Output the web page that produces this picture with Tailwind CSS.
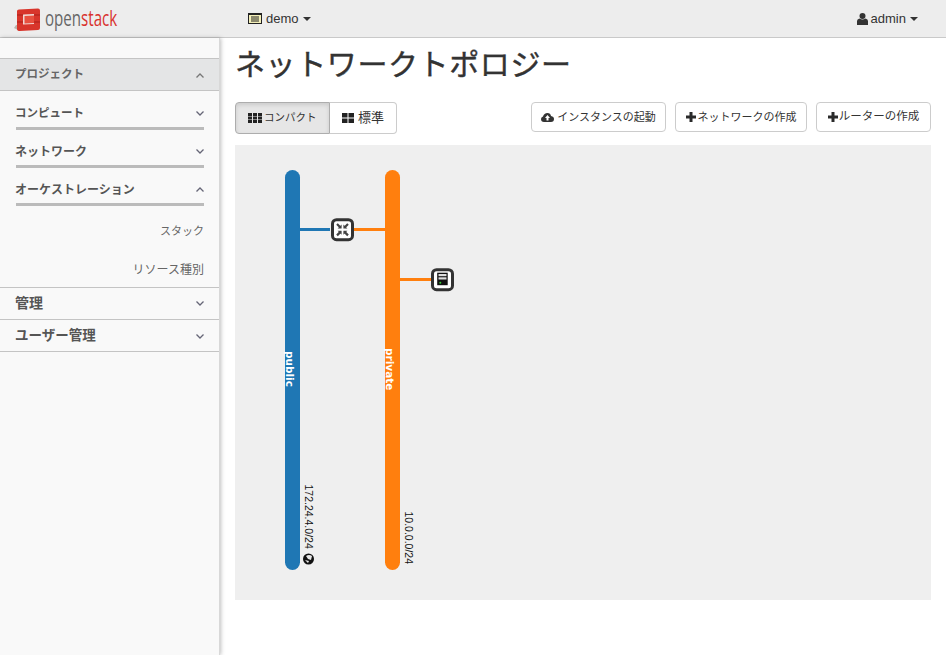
<!DOCTYPE html>
<html lang="ja">
<head>
<meta charset="utf-8">
<title>ネットワークトポロジー</title>
<script src="https://cdn.jsdelivr.net/npm/@tailwindcss/browser@4"></script>
</head>
<body class="font-['Liberation_Sans','Noto_Sans_CJK_JP',sans-serif] text-[#333] bg-white">
<div class="h-[655px] w-[946px] overflow-hidden flex flex-col">

    <!-- navbar -->
    <nav class="h-[38px] shrink-0 flex items-center bg-[#ededed] border-b border-[#c9c9c9] text-[13px] text-[#333]">
        <div class="w-[248px] shrink-0 pl-[14px] flex items-center gap-[6px]">
            <svg width="26" height="24" viewBox="0 0 26 24">
                <path d="M0 21 L4 23 L4 18 L2 18 Z" fill="#b9b4ad"/>
                <path d="M3 4 Q3 2.500 5 2.500 L24 1.500 Q26 1.500 26 3.500 L26 21 Q26 23 24 23 L6 24 Q3 24 3 22 Z" fill="#d8352b"/>
                <path d="M3 8 H10 M3 15 H10 M19 8 H26 M19 15 H26" stroke="#a9201a" stroke-width="1"/>
                <path d="M9 7.500 L20 7 L20 17 L9 17.500 Z" fill="#f0d8d4"/>
                <path d="M10.500 9 L20 8.500 L20 16 L10.500 16.500 Z" fill="#e8503f"/>
            </svg>
            <span class="font-['Open_Sans',sans-serif] text-[21px] leading-none scale-x-[.72] origin-left text-[#666] -ml-[1px]">open<span class="text-[#d9322d]">stack</span></span>
        </div>
        <div class="flex items-center gap-[4px]">
            <svg width="14" height="11" viewBox="0 0 14 11"><rect width="14" height="11" fill="#222"/><rect x="1" y="2" width="12" height="8" fill="#f3efb8"/><path d="M3 4 H11 M3 6 H11 M3 8 H11" stroke="#222" stroke-width="1"/></svg>
            <span>demo</span>
            <span class="w-0 h-0 border-x-[4px] border-x-transparent border-t-[4px] border-t-[#333]"></span>
        </div>
        <div class="ml-auto mr-[28px] flex items-center gap-[3px]">
            <svg width="11" height="12" viewBox="0 0 11 12"><circle cx="5.500" cy="3" r="3" fill="#333"/><path d="M0 12 V8 Q0 6 2.500 5.500 Q5.500 7.500 8.500 5.500 Q11 6 11 8 V12 Z" fill="#333"/></svg>
            <span>admin</span>
            <span class="w-0 h-0 border-x-[4px] border-x-transparent border-t-[4px] border-t-[#333] ml-[1px]"></span>
        </div>
    </nav>

    <div class="flex flex-1 min-h-0">

        <!-- sidebar -->
        <aside class="w-[220px] shrink-0 bg-[#f9f9f9] border-r border-[#d8d8d8] shadow-[1px_0_4px_rgba(0,0,0,.25)] pt-[20px] text-[#555]">
            <div class="h-[33px] flex items-center justify-between pl-[15px] pr-[15px] pt-[1px] bg-[#e4e5e6] border-y border-[#c4c4c4] font-bold text-[#666] text-[11.5px]">
                <span>プロジェクト</span>
                <svg width="8" height="5" viewBox="0 0 8 5"><path d="M.5 4.500 L4 1 L7.500 4.500" fill="none" stroke="#777" stroke-width="1.300"/></svg>
            </div>

            <div class="pl-[15px] pr-[15px]">
                <div class="h-[36px] flex items-center justify-between font-bold pt-[9px] text-[11.5px]">
                    <span>コンピュート</span>
                    <svg width="8" height="5" viewBox="0 0 8 5"><path d="M.5 .5 L4 4 L7.500 .5" fill="none" stroke="#667" stroke-width="1.300"/></svg>
                </div>
                <div class="h-[3px] bg-[#bbb] ml-[1px]"></div>
                <div class="h-[35px] flex items-center justify-between font-bold pt-[8px] text-[12px]">
                    <span>ネットワーク</span>
                    <svg width="8" height="5" viewBox="0 0 8 5"><path d="M.5 .5 L4 4 L7.500 .5" fill="none" stroke="#667" stroke-width="1.300"/></svg>
                </div>
                <div class="h-[3px] bg-[#bbb] ml-[1px]"></div>
                <div class="h-[35px] flex items-center justify-between font-bold pt-[8px] text-[12px]">
                    <span>オーケストレーション</span>
                    <svg width="8" height="5" viewBox="0 0 8 5"><path d="M.5 4.500 L4 1 L7.500 4.500" fill="none" stroke="#667" stroke-width="1.300"/></svg>
                </div>
                <div class="h-[3px] bg-[#bbb] ml-[1px]"></div>
                <div class="h-[49px] flex items-center justify-end pt-[1px] font-normal text-[#666] text-[11px]">スタック</div>
                <div class="h-[30px] flex items-center justify-end font-normal text-[#666] text-[12px]">リソース種別</div>
            </div>

            <div class="mt-[2px] h-[33px] flex items-center justify-between pl-[15px] pr-[15px] border-y border-[#c4c4c4] font-bold text-[14px]">
                <span>管理</span>
                <svg width="8" height="5" viewBox="0 0 8 5"><path d="M.5 .5 L4 4 L7.500 .5" fill="none" stroke="#667" stroke-width="1.300"/></svg>
            </div>
            <div class="h-[32px] flex items-center justify-between pl-[15px] pr-[15px] pt-[2px] border-b border-[#c4c4c4] font-bold text-[13.500px]">
                <span>ユーザー管理</span>
                <svg width="8" height="5" viewBox="0 0 8 5"><path d="M.5 .5 L4 4 L7.500 .5" fill="none" stroke="#667" stroke-width="1.300"/></svg>
            </div>
        </aside>

        <!-- center -->
        <main class="flex-1 min-w-0 pl-[15px] pr-[15px]">
            <h1 class="h-[64px] pt-[5px] text-[30px] leading-[44px] font-normal tracking-[.6px] [-webkit-text-stroke:0.4px_#333] text-[#333]">ネットワークトポロジー</h1>

            <div class="h-[43px] flex items-start justify-between text-[11px]">
                <div class="flex h-[32px]">
                    <button class="flex items-center gap-[2px] pl-[12px] w-[95px] bg-[#e6e6e6] border border-[#adadad] rounded-l-[4px] shadow-[inset_0_2px_4px_rgba(0,0,0,.12)] text-[10.500px]">
                        <svg width="14" height="10" viewBox="0 0 14 10" fill="#222"><path d="M0 0h4v3H0zM5 0h4v3H5zM10 0h4v3h-4zM0 3.500h4v3H0zM5 3.500h4v3H5zM10 3.500h4v3h-4zM0 7h4v3H0zM5 7h4v3H5zM10 7h4v3h-4z"/></svg>
                        <span>コンパクト</span>
                    </button>
                    <button class="flex items-center gap-[4px] pl-[12px] w-[67px] bg-white border border-l-0 border-[#ccc] rounded-r-[4px] text-[13px]">
                        <svg width="12" height="10" viewBox="0 0 12 10" fill="#222"><path d="M0 0h5.500v4.500H0zM6.500 0H12v4.500H6.500zM0 5.500h5.500V10H0zM6.500 5.500H12V10H6.500z"/></svg>
                        <span>標準</span>
                    </button>
                </div>
                <div class="flex gap-[9px] h-[30px]">
                    <button class="w-[135px] flex items-center justify-center gap-[3px] bg-white border border-[#ccc] rounded-[4px]">
                        <svg width="13" height="10" viewBox="0 0 13 10"><path d="M3 10 Q0 10 0 7 Q0 5 2 4.500 Q3 1 6.500 1 Q9.500 1 10 4 Q13 4.500 13 7 Q13 10 10 10 Z" fill="#333"/><path d="M6.500 3 L9 6 H7.500 V8.500 H5.500 V6 H4 Z" fill="#fff"/></svg>
                        <span>インスタンスの起動</span>
                    </button>
                    <button class="w-[132px] flex items-center justify-center gap-[2px] bg-white border border-[#ccc] rounded-[4px]">
                        <svg width="10" height="10" viewBox="0 0 10 10"><path d="M3.500 0h3v3.500H10v3H6.500V10h-3V6.500H0v-3h3.500z" fill="#2a2a2a"/></svg>
                        <span>ネットワークの作成</span>
                    </button>
                    <button class="w-[115px] flex items-center justify-center gap-[1px] bg-white border border-[#ccc] rounded-[4px] text-[11.500px]">
                        <svg width="10" height="10" viewBox="0 0 10 10"><path d="M3.500 0h3v3.500H10v3H6.500V10h-3V6.500H0v-3h3.500z" fill="#2a2a2a"/></svg>
                        <span>ルーターの作成</span>
                    </button>
                </div>
            </div>

            <!-- topology canvas -->
            <svg class="block" width="696" height="455" viewBox="0 0 696 455">
                <rect width="696" height="455" fill="#efefef"/>

                <path d="M65 84.500 H95" stroke="#1f77b4" stroke-width="3"/>
                <path d="M118 84.500 H150" stroke="#ff7f0e" stroke-width="3"/>
                <path d="M165 134.500 H198" stroke="#ff7f0e" stroke-width="3"/>

                <rect x="50" y="25" width="15" height="400" rx="7.500" fill="#1f77b4"/>
                <rect x="150" y="25" width="15" height="400" rx="7.500" fill="#ff7f0e"/>

                <text transform="translate(50.500 206) rotate(90)" font-family="'DejaVu Sans'" font-size="10.500" font-weight="bold" fill="#fff">public</text>
                <text transform="translate(150.500 203) rotate(90)" font-family="'DejaVu Sans'" font-size="10.500" font-weight="bold" fill="#fff">private</text>
                <text transform="translate(70 339.500) rotate(90)" font-family="'Liberation Sans'" font-size="10.500" fill="#111">172.24.4.0/24</text>
                <text transform="translate(170 366.500) rotate(90)" font-family="'Liberation Sans'" font-size="10.500" fill="#111">10.0.0.0/24</text>

                <!-- globe -->
                <circle cx="73.500" cy="414" r="5.500" fill="#111"/>
                <path d="M71 411 Q74 409 77 411 L76 415 L73 414 Z M70 415 L73 418 L74 416 Z" fill="#e8e8e8"/>

                <!-- router -->
                <rect x="97.500" y="74.700" width="20" height="20" rx="4" fill="#fff" stroke="#333" stroke-width="3"/>
                <path d="M102 79 L105.500 82.500 M113 79 L109.500 82.500 M102 90.400 L105.500 86.900 M113 90.400 L109.500 86.900" stroke="#444" stroke-width="2.200"/>
                <path d="M106.600 83.600 H102.600 L106.600 79.600 Z M108.400 83.600 H112.400 L108.400 79.600 Z M106.600 85.800 H102.600 L106.600 89.800 Z M108.400 85.800 H112.400 L108.400 89.800 Z" fill="#444"/>

                <!-- instance -->
                <rect x="197.500" y="124.700" width="20" height="20" rx="4" fill="#fff" stroke="#333" stroke-width="3"/>
                <rect x="202.200" y="127.700" width="10.500" height="12.500" fill="#111"/>
                <rect x="203.500" y="129" width="8" height="2.200" fill="#ddd"/>
                <rect x="203.500" y="132.300" width="8" height="2.200" fill="#ddd"/>
                <circle cx="205.300" cy="137.700" r="1" fill="#3c3"/>
            </svg>
        </main>
    </div>
</div>
</body>
</html>
